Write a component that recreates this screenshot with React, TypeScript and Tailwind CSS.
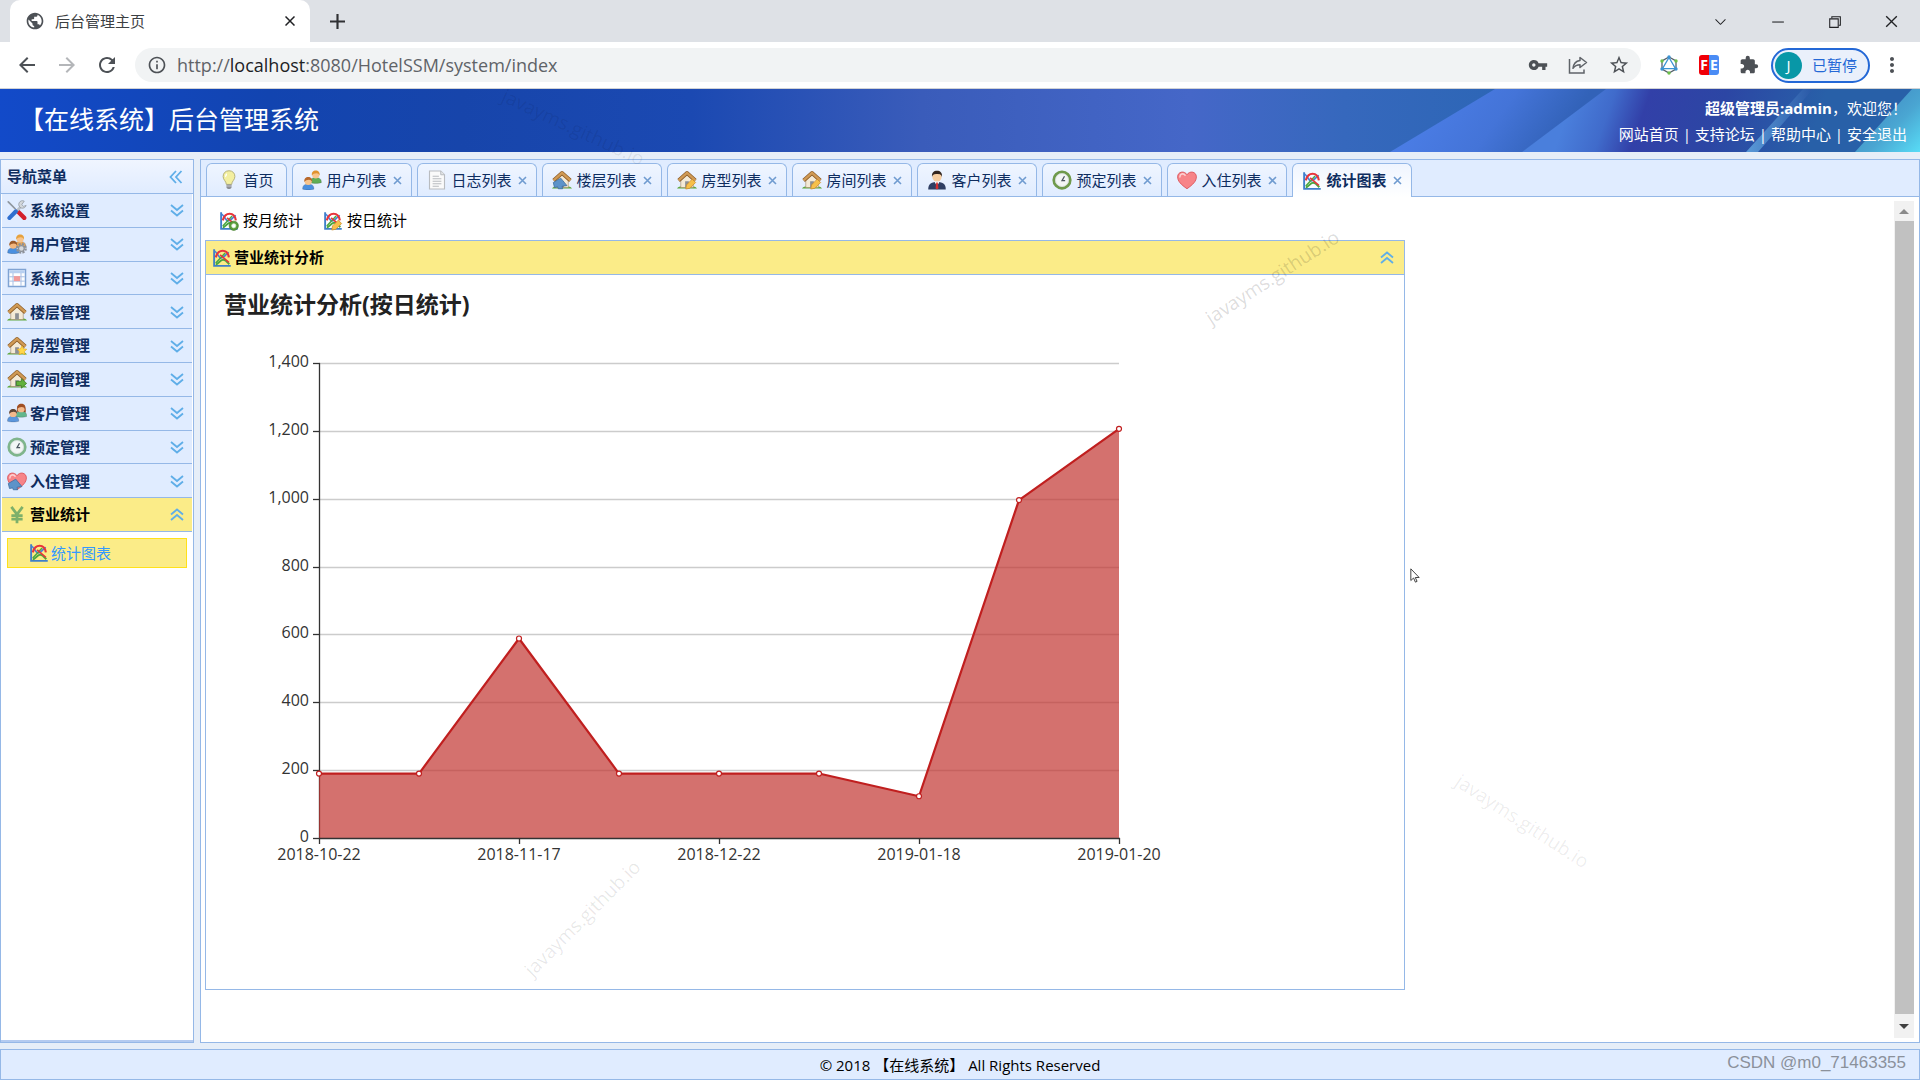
import type { ReactNode } from "react";
import {
  MdArrowBack,
  MdArrowForward,
  MdExtension,
  MdInfoOutline,
  MdMoreVert,
  MdPublic,
  MdRefresh,
  MdStarBorder,
  MdVpnKey,
} from "react-icons/md";
import { VscChevronDown, VscChromeClose, VscChromeMinimize, VscChromeRestore } from "react-icons/vsc";

/* ---------- 16px colour icons ---------- */

function Svg({ children }: { children: ReactNode }) {
  return (
    <svg viewBox="0 0 16 16" className="h-5 w-5 shrink-0" aria-hidden="true">
      {children}
    </svg>
  );
}

function PersonShape({ x, y, skin, hair, body }: { x: number; y: number; skin: string; hair: string; body: string }) {
  return (
    <g transform={`translate(${x} ${y})`}>
      <path d="M0 9.800C0 7 1 5.800 4.500 5.800S9 7 9 9.800c-2 .8-7 .8-9 0z" fill={body} stroke="#00000040" strokeWidth=".5" />
      <circle cx="4.500" cy="3.500" r="2.900" fill={skin} />
      <path d="M1.400 4C1 1.200 2.500 0 4.500 0s3.500 1.200 3.100 4C7 2.800 6.300 2.200 5 2.200 3.500 2.200 2.200 2.800 1.400 4z" fill={hair} />
    </g>
  );
}

const PencilBadge = () => (
  <path d="M7 15.200l.6-3.300L12.200 7.300l2.700 2.700-4.600 4.600z" fill="#f7c04a" stroke="#c98a2b" strokeWidth=".6" />
);

const PlusBadge = () => (
  <>
    <circle cx="11.800" cy="11.800" r="3.700" fill="#5a9c3c" stroke="#3f7a26" strokeWidth=".5" />
    <circle cx="11.800" cy="11.800" r="1.700" fill="#fff" stroke="#d5edc8" strokeWidth=".6" />
  </>
);

function ChartIcon({ badge }: { badge?: ReactNode }) {
  return (
    <Svg>
      <path d="M1.700 1v13.300H15" fill="none" stroke="#3f7fca" strokeWidth="1.500" />
      <path d="M3 13.200C5 13 6.300 9.500 9 9.300c2 0 3.200 1.800 4.800 3.700" fill="none" stroke="#4aa63f" strokeWidth="1.600" />
      <path d="M2.200 2.500c1.800.8 2.800 5 5 5.500C9.500 8.500 10.500 5 13.500 3.500" fill="none" stroke="#4a7fd6" strokeWidth="1.300" />
      <path d="M3 12L10.500 4" fill="none" stroke="#4aa63f" strokeWidth="1.200" />
      <path d="M3 7.500C4 4 6 2.200 8.500 2.200s4.500 2 5 5.300" fill="none" stroke="#e8343a" strokeWidth="1.700" />
      <path d="M6.500 5.500L13.500 11.500" fill="none" stroke="#e8343a" strokeWidth="1.200" />
      {badge}
    </Svg>
  );
}

function HouseIcon({ badge }: { badge?: ReactNode }) {
  return (
    <Svg>
      <path d="M0 14.800c1-3 15-3 16 0z" fill="#5fa83e" />
      <path d="M3 7.500L8 3l5 4.500V14H3z" fill="#f4ead6" stroke="#a58a66" strokeWidth=".5" />
      <path d="M6.500 9h3v5h-3z" fill="#8d8f94" />
      <path d="M1.300 8.400L8 2.400l6.700 6" fill="none" stroke="#8a5a25" strokeWidth="3" strokeLinejoin="round" />
      <path d="M1.300 8.300L8 2.300l6.700 6" fill="none" stroke="#d09a55" strokeWidth="2" strokeLinejoin="round" />
      {badge}
    </Svg>
  );
}

const StarBadge = () => (
  <path d="M12 7.800l1.200 2.400 2.600.4-1.900 1.800.5 2.600-2.400-1.200-2.400 1.200.5-2.600-1.900-1.800 2.600-.4z" fill="#ffd84a" stroke="#dfa51c" strokeWidth=".5" />
);
const ArrowBadge = () => (
  <path d="M7.500 9.800h4V7.700l4.200 3.800-4.200 3.800v-2.100h-4z" fill="#62b13c" stroke="#36781d" strokeWidth=".6" />
);
const MegaphoneBadge = () => (
  <path d="M1 10l6-3.500 5 6-4 .5.500 2H5l-.5-1.500L2 14z" fill="#5d93c9" stroke="#3b6b9c" strokeWidth=".6" />
);

function BulbIcon() {
  return (
    <Svg>
      <path d="M8 .6c-3 0-4.700 2-4.700 4.600C3.300 8 5.700 8.800 5.900 11.500h4.200C10.300 8.800 12.700 8 12.700 5.200 12.700 2.600 11 .6 8 .6z" fill="#f3efa0" stroke="#b5b27c" strokeWidth=".8" />
      <path d="M6.200 2.500C5 3.200 4.700 4.500 5 6c.8-.8 1.800-1.800 1.200-3.500z" fill="#fff" />
      <path d="M6 11.500h4v2.700c-.8 1.400-3.200 1.400-4 0z" fill="#8c8f95" />
      <path d="M6 12.800h4" stroke="#d9dadd" strokeWidth=".6" />
    </Svg>
  );
}

function UsersIcon() {
  return (
    <Svg>
      <PersonShape x={6.5} y={0.3} skin="#f8c48c" hair="#e0922e" body="#5fae55" />
      <PersonShape x={0.5} y={5.5} skin="#f8c48c" hair="#b8692c" body="#4a90e0" />
    </Svg>
  );
}

function UserGearIcon() {
  return (
    <Svg>
      <PersonShape x={6} y={0.3} skin="#f8c48c" hair="#e6a13c" body="#e8a85a" />
      <PersonShape x={0.5} y={5.3} skin="#f3b67e" hair="#9b5a2a" body="#4a90e0" />
      <circle cx="11.500" cy="11.500" r="3.400" fill="none" stroke="#8d9298" strokeWidth="2" strokeDasharray="1.700 .97" />
      <circle cx="11.500" cy="11.500" r="2.300" fill="#d7dadd" stroke="#8d9298" strokeWidth="1" />
    </Svg>
  );
}

function PeopleIcon() {
  return (
    <Svg>
      <path d="M8 7C7.500 2 9 .5 11.500.5S15.300 2 15 7.500z" fill="#a04f24" />
      <PersonShape x={6.8} y={1} skin="#f3b98c" hair="#a04f24" body="#62b68c" />
      <PersonShape x={0.4} y={4.8} skin="#f3b98c" hair="#5e4636" body="#5b96dc" />
    </Svg>
  );
}

function ManagerIcon() {
  return (
    <Svg>
      <path d="M1 15.500C1 11 3 9.500 8 9.500s7 1.500 7 6z" fill="#2f3e63" />
      <path d="M6 9.300h4L8 13z" fill="#fff" />
      <path d="M7.400 10h1.200l.6 4.500L8 15.500l-1.200-1z" fill="#d42f2f" />
      <circle cx="8" cy="5.500" r="3.700" fill="#f6cda0" />
      <path d="M4 5.500C3.700 2 5.500.6 8 .6s4.300 1.400 4 4.900c-.6-1.700-1.300-2.300-4-2.300s-3.400.6-4 2.300z" fill="#33261f" />
    </Svg>
  );
}

function DocumentIcon() {
  return (
    <Svg>
      <path d="M2 .8h9l3 3v11.400H2z" fill="#fafafa" stroke="#b9bcc0" strokeWidth=".9" />
      <path d="M11 .8v3h3" fill="#e5e7e9" stroke="#b9bcc0" strokeWidth=".8" />
      <path d="M4.500 5h5M4.500 7h7M4.500 9h7M4.500 11h7M4.500 13h5" stroke="#b9bcc0" strokeWidth=".9" />
    </Svg>
  );
}

function TableIcon() {
  return (
    <Svg>
      <path d="M1.200 1.200h13.600v13.600H1.200z" fill="#fdfeff" stroke="#7fa3d3" strokeWidth="1.200" />
      <path d="M1.800 1.800h12.400v2.400H1.800z" fill="#b8d0f0" />
      <path d="M1.800 7h12.400M1.800 10.500h12.400M4.800 4v10.300M11.200 4v10.300" stroke="#a9c0e4" strokeWidth=".8" />
      <path d="M5.500 6.500h5v4h-5z" fill="#f29a98" />
    </Svg>
  );
}

function ToolsIcon() {
  return (
    <Svg>
      <path d="M1 1.500l5.500 5.500" stroke="#8f979f" strokeWidth="1.400" strokeLinecap="round" />
      <path d="M8.500 9l5.300 5.300" stroke="#d3202c" strokeWidth="3.400" strokeLinecap="round" />
      <path d="M4 12.500L11.500 5" stroke="#b9bfc6" strokeWidth="2" />
      <path d="M2 14.300L7 9.200" stroke="#2f6fd0" strokeWidth="3.400" strokeLinecap="round" />
      <path d="M13.800.9a3 3 0 1 0 1.500 3.400l-2 .8-1.500-1.400z" fill="#d3d7db" stroke="#8f979f" strokeWidth=".6" />
    </Svg>
  );
}

function ClockIcon({ rim = "#6f9a4c" }: { rim?: string }) {
  return (
    <Svg>
      <circle cx="8" cy="8" r="6.600" fill="#f3f6f6" stroke={rim} strokeWidth="2.200" />
      <circle cx="8" cy="8" r="5.200" fill="none" stroke="#cfd8d4" strokeWidth=".6" />
      <path d="M10 5L8 8.500h2.500" fill="none" stroke="#4b5560" strokeWidth="1" />
    </Svg>
  );
}

function HeartIcon({ badge }: { badge?: ReactNode }) {
  return (
    <Svg>
      <path d="M8 15C3 11.500.5 8.800.5 5.500.5 1.200 6 .3 8 3.800 10 .3 15.500 1.200 15.500 5.500 15.500 8.800 13 11.500 8 15z" fill="#f78488" stroke="#d9555b" strokeWidth=".7" />
      <path d="M2.300 5.500C2.300 3 5 2.300 6.500 4.200" fill="none" stroke="#fdd0d1" strokeWidth="1.200" strokeLinecap="round" />
      {badge}
    </Svg>
  );
}

function YenIcon() {
  return (
    <Svg>
      <path d="M3.500 1.500L8 7.500l4.500-6M8 7v7.500M3.500 8.500h9M3.500 11.300h9" fill="none" stroke="#7db06a" strokeWidth="2.200" />
    </Svg>
  );
}

const chevrons = {
  left: "M7 1L1.500 7 7 13M12.500 1L7 7l5.500 6",
  down: "M1 2l6 5 6-5M1 7.500l6 5 6-5",
  up: "M1 6.500l6-5 6 5M1 12l6-5 6 5",
};

function Chevrons({ dir }: { dir: keyof typeof chevrons }) {
  return (
    <svg viewBox="0 0 14 14" className="h-[14px] w-[14px]" fill="none" stroke="#5faee8" strokeWidth="1.800">
      <path d={chevrons[dir]} />
    </svg>
  );
}

/* ---------- data ---------- */

const tabs = [
  { label: "首页", icon: <BulbIcon />, fixed: true },
  { label: "用户列表", icon: <UsersIcon /> },
  { label: "日志列表", icon: <DocumentIcon /> },
  { label: "楼层列表", icon: <HouseIcon badge={<MegaphoneBadge />} /> },
  { label: "房型列表", icon: <HouseIcon badge={<PencilBadge />} /> },
  { label: "房间列表", icon: <HouseIcon badge={<PencilBadge />} /> },
  { label: "客户列表", icon: <ManagerIcon /> },
  { label: "预定列表", icon: <ClockIcon /> },
  { label: "入住列表", icon: <HeartIcon /> },
  { label: "统计图表", icon: <ChartIcon />, active: true },
];

const menus = [
  { label: "系统设置", icon: <ToolsIcon /> },
  { label: "用户管理", icon: <UserGearIcon /> },
  { label: "系统日志", icon: <TableIcon /> },
  { label: "楼层管理", icon: <HouseIcon /> },
  { label: "房型管理", icon: <HouseIcon badge={<StarBadge />} /> },
  { label: "房间管理", icon: <HouseIcon badge={<ArrowBadge />} /> },
  { label: "客户管理", icon: <PeopleIcon /> },
  { label: "预定管理", icon: <ClockIcon rim="#7fb58c" /> },
  { label: "入住管理", icon: <HeartIcon badge={<MegaphoneBadge />} /> },
  { label: "营业统计", icon: <YenIcon />, active: true },
];

const values = [190, 190, 588, 190, 190, 190, 123, 996, 1206];
const dates = ["2018-10-22", "2018-11-17", "2018-12-22", "2019-01-18", "2019-01-20"];
const ticks = [0, 200, 400, 600, 800, 1000, 1200, 1400];

/* ---------- browser frame ---------- */

function BrowserBar() {
  return (
    <div className="shrink-0 bg-[#dee1e6]">
      <div className="flex h-[42px] items-center">
        <div className="ml-[10px] flex h-full w-[300px] items-center rounded-t-[10px] bg-white pr-[12px] pl-[15px]">
          <MdPublic className="h-5 w-5 text-[#4d5156]" />
          <span className="ml-[10px] flex-1 text-[15px] text-[#3c4043]">后台管理主页</span>
          <button aria-label="关闭标签页" className="flex h-[16px] w-[16px] items-center justify-center">
            <svg viewBox="0 0 10 10" className="h-[10px] w-[10px]" stroke="#202124" strokeWidth="1.500">
              <path d="M.5.5l9 9M9.500.5l-9 9" />
            </svg>
          </button>
        </div>
        <button aria-label="新标签页" className="ml-[18px] flex h-[18px] w-[18px] items-center justify-center">
          <svg viewBox="0 0 14 14" className="h-[15px] w-[15px]" stroke="#303134" strokeWidth="2">
            <path d="M7 0v14M0 7h14" />
          </svg>
        </button>
        <div className="ml-auto flex h-[36px] items-center gap-[40px] pr-[20px] text-[17px] text-[#202124]">
          <button aria-label="搜索标签页"><VscChevronDown /></button>
          <button aria-label="最小化"><VscChromeMinimize /></button>
          <button aria-label="还原"><VscChromeRestore /></button>
          <button aria-label="关闭"><VscChromeClose /></button>
        </div>
      </div>

      <div className="flex h-[47px] items-center border-b border-[#d0d2d6] bg-white pr-[16px] pl-[15px] text-[#4d5156]">
        <button aria-label="后退" className="mr-[16px]"><MdArrowBack className="h-6 w-6" /></button>
        <button aria-label="前进" className="mr-[16px] text-[#b4b6b9]"><MdArrowForward className="h-6 w-6" /></button>
        <button aria-label="刷新" className="mr-[16px]"><MdRefresh className="h-6 w-6" /></button>
        <div className="flex h-[34px] flex-1 items-center rounded-full bg-[#f1f3f4] pr-[11px] pl-[12px]">
          <MdInfoOutline className="h-5 w-5" />
          <span className="ml-[10px] flex-1 text-[18px] leading-6 text-[#5f6368]">
            http://<span className="text-[#202124]">localhost</span>:8080/HotelSSM/system/index
          </span>
          <div className="flex items-center gap-[20px]">
            <button aria-label="密码"><MdVpnKey className="h-5 w-5" /></button>
            <button aria-label="分享">
              <svg viewBox="0 0 20 20" className="h-5 w-5" fill="none" stroke="#5f6368" strokeWidth="1.500">
                <path d="M1.500 4v14H16v-3.500" />
                <path d="M12 2.500l6.500 5-6.500 5V9.800c-3 0-5 .8-7 3.500.5-4.500 3-7.300 7-7.800z" strokeLinejoin="round" />
              </svg>
            </button>
            <button aria-label="收藏"><MdStarBorder className="h-[22px] w-[22px]" /></button>
          </div>
        </div>
        <button aria-label="GraphQL" className="ml-[18px]">
          <svg viewBox="0 0 20 20" className="h-5 w-5" fill="none" strokeWidth="1.300">
            <path d="M10 2l7 4v8l-7 4-7-4V6z" stroke="#55606a" />
            <path d="M10 2.500l6.500 11.200h-13z" stroke="#3b93d3" />
            <g fill="#3b93d3"><circle cx="10" cy="2" r="1.700" /><circle cx="3" cy="14" r="1.700" /><circle cx="17" cy="14" r="1.700" /></g>
            <g fill="#6cc04a"><circle cx="3" cy="6" r="1.700" /><circle cx="17" cy="6" r="1.700" /><circle cx="10" cy="18" r="1.700" /></g>
          </svg>
        </button>
        <button aria-label="FeHelper" className="ml-[20px] flex h-5 w-5 overflow-hidden rounded-[3px] text-[14px] leading-5 font-bold text-white">
          <span className="w-1/2 bg-[#f00008]">F</span>
          <span className="w-1/2 bg-[#4a8cf5]">E</span>
        </button>
        <button aria-label="扩展程序" className="ml-[20px]"><MdExtension className="h-5 w-5" /></button>
        <button className="ml-[12px] flex h-[35px] w-[99px] items-center rounded-full border-2 border-[#2468d6] bg-[#eaf0fb] pl-[2px] text-[15px] text-[#2468d6]">
          <span className="flex h-[27px] w-[27px] items-center justify-center rounded-full bg-[#0897a7] text-white">J</span>
          <span className="ml-[10px]">已暂停</span>
        </button>
        <button aria-label="菜单" className="ml-[10px]"><MdMoreVert className="h-6 w-6" /></button>
      </div>
    </div>
  );
}

/* ---------- admin layout ---------- */

function Header() {
  return (
    <header className="relative flex h-[63px] shrink-0 items-center justify-between pr-[13px] pl-[19px] text-white">
      <svg viewBox="0 0 1920 63" preserveAspectRatio="none" className="absolute inset-0 h-full w-full" aria-hidden="true">
        <defs>
          <linearGradient id="sky">
            <stop offset="0" stopColor="#124ac9" />
            <stop offset=".14" stopColor="#1244b0" />
            <stop offset=".24" stopColor="#1745ab" />
            <stop offset=".36" stopColor="#1b49b2" />
            <stop offset=".48" stopColor="#3a5cba" />
            <stop offset=".62" stopColor="#4567c8" />
            <stop offset=".7" stopColor="#3668bd" />
            <stop offset=".78" stopColor="#2d66b6" />
          </linearGradient>
          <linearGradient id="band" gradientUnits="userSpaceOnUse" x1="1430" y1="20" x2="1530" y2="90">
            <stop offset="0" stopColor="#4a7ce4" />
            <stop offset=".5" stopColor="#4474d8" />
            <stop offset="1" stopColor="#3262b8" />
          </linearGradient>
          <linearGradient id="violet" gradientUnits="userSpaceOnUse" x1="1565" y1="31" x2="1790" y2="110">
            <stop offset="0" stopColor="#4a7fdc" />
            <stop offset=".16" stopColor="#406bcb" />
            <stop offset=".3" stopColor="#3240a8" />
            <stop offset=".6" stopColor="#2c46a4" />
            <stop offset="1" stopColor="#2860a8" />
          </linearGradient>
          <linearGradient id="ray" x1="0" y1="0" x2="1" y2="0">
            <stop offset="0" stopColor="#5a9ad8" />
            <stop offset="1" stopColor="#2a58a6" />
          </linearGradient>
          <linearGradient id="cyan" x1="0" y1="0" x2="1" y2="1">
            <stop offset="0" stopColor="#3b7dbd" />
            <stop offset=".6" stopColor="#4aa6d2" />
            <stop offset="1" stopColor="#58dcf6" />
          </linearGradient>
        </defs>
        <path d="M0 0h1920v63H0z" fill="url(#sky)" />
        <path d="M1390 63L1495 0H1612L1522 63z" fill="url(#band)" />
        <path d="M1522 63L1606 0H1920V63z" fill="url(#violet)" />
        <path d="M1746 63L1803 0H1813L1758 63z" fill="url(#ray)" />
        <path d="M1855 63L1912 0h8v63z" fill="url(#cyan)" />
      </svg>
      <h1 className="relative pb-[3px] text-[25px] leading-8">【在线系统】后台管理系统</h1>
      <div className="relative text-right text-[15px] leading-[26px]">
        <p><b>超级管理员:admin</b>，欢迎您！</p>
        <nav>
          <a href="#home">网站首页</a> | <a href="#forum">支持论坛</a> | <a href="#help">帮助中心</a> | <a href="#logout">安全退出</a>
        </nav>
      </div>
    </header>
  );
}

function Sidebar() {
  return (
    <aside className="flex w-[194px] shrink-0 flex-col border border-[#95b8e7] bg-white text-[15px] text-[#0e2d5f]">
      <div className="flex h-[34px] shrink-0 items-center justify-between border-b border-[#95b8e7] bg-linear-to-b from-[#f0f5ff] to-[#e0ecff] pr-[10px] pl-[6px] font-bold">
        导航菜单
        <button aria-label="收起"><Chevrons dir="left" /></button>
      </div>
      <ul className="grid h-[338px] shrink-0 grid-rows-10 px-px">
        {menus.map((m) => (
          <li
            key={m.label}
            className={m.active ? "border-b border-[#95b8e7] bg-[#fbec88] text-black" : "border-b border-[#95b8e7] bg-[#e0ecff]"}
          >
            <button className="flex h-full w-full items-center gap-[3px] pr-[8px] pl-[5px] font-bold">
              {m.icon}
              <span className="flex-1 text-left">{m.label}</span>
              <Chevrons dir={m.active ? "up" : "down"} />
            </button>
          </li>
        ))}
      </ul>
      <a href="#chart" className="mx-[6px] mt-[6px] flex h-[30px] items-center gap-[2px] border border-[#ffe11a] bg-[#fbec88] pl-[21px] text-[#3399ff]">
        <ChartIcon />
        统计图表
      </a>
      <div className="mt-auto h-[2px] bg-[#b4cbf0]" />
    </aside>
  );
}

function TabBar() {
  return (
    <div className="flex h-[37px] shrink-0 items-end gap-[5px] border-b border-[#95b8e7] bg-[#e0ecff] pl-[5px] text-[15px] text-[#0e2d5f]">
      {tabs.map((t) => (
        <div
          key={t.label}
          className={
            t.active
              ? "-mb-px flex h-[34px] w-[120px] items-center justify-center rounded-t-[6px] border border-b-0 border-[#95b8e7] bg-linear-to-b from-[#eff5ff] to-white font-bold"
              : t.fixed
                ? "flex h-[33px] w-[81px] items-center justify-center rounded-t-[6px] border border-b-0 border-[#95b8e7] bg-linear-to-b from-[#eff5ff] to-[#e0ecff]"
                : "flex h-[33px] w-[120px] items-center justify-center rounded-t-[6px] border border-b-0 border-[#95b8e7] bg-linear-to-b from-[#eff5ff] to-[#e0ecff]"
          }
        >
          <button className="flex items-center gap-[4px]">
            {t.icon}
            {t.label}
          </button>
          {!t.fixed && (
            <button aria-label={`关闭${t.label}`} className="ml-[6px]">
              <svg viewBox="0 0 9 9" className="h-[9px] w-[9px]" stroke="#6f9bd0" strokeWidth="1.600">
                <path d="M1 1l7 7M8 1L1 8" />
              </svg>
            </button>
          )}
        </div>
      ))}
    </div>
  );
}

const LEFT = 113;
const BASE = 505;
const px = (i: number) => LEFT + i * 100;
const py = (v: number) => BASE - (v * 475) / 1400;

function AreaChart() {
  const line = values.map((v, i) => `${px(i)},${py(v)}`).join(" ");
  return (
    <svg viewBox="0 0 1198 656" className="block w-full" fill="#333" fontSize="16" role="img" aria-label="营业统计分析">
      {ticks.map((t) => {
        const y = Math.round(py(t));
        return (
          <g key={t}>
            {t > 0 && <path d={`M${LEFT} ${y + 0.5}H${px(8)}`} stroke="#ccc" strokeWidth="1.300" />}
            <path d={`M${LEFT - 6} ${y + 0.5}h7`} stroke="#333" strokeWidth="1.300" />
            <text x={LEFT - 10} y={y + 4} textAnchor="end">{t.toLocaleString("en-US")}</text>
          </g>
        );
      })}
      <path d={`M${LEFT + 0.5} ${py(1400)}V${BASE}`} stroke="#333" strokeWidth="1.300" />
      <polygon points={`${px(0)},${BASE} ${line} ${px(8)},${BASE}`} fill="#c23531" fillOpacity=".7" />
      <path d={`M${LEFT} ${BASE + 0.5}H${px(8) + 1}`} stroke="#333" strokeWidth="1.300" />
      {dates.map((d, i) => (
        <g key={d}>
          <path d={`M${px(i * 2) + 0.5} ${BASE}v6`} stroke="#333" strokeWidth="1.300" />
          <text x={px(i * 2)} y={BASE + 22} textAnchor="middle">{d}</text>
        </g>
      ))}
      <polyline points={line} fill="none" stroke="#c01f1f" strokeWidth="2.200" strokeLinejoin="bevel" />
      {values.map((v, i) => (
        <circle key={i} cx={px(i)} cy={py(v)} r="2.500" fill="#fff" stroke="#c01f1f" strokeWidth="1.200" />
      ))}
    </svg>
  );
}

function StatsPage() {
  return (
    <div className="min-w-0 flex-1 pl-[4px] text-[15px]">
      <div className="flex h-[43px] items-center gap-[20px] pt-[4px] pl-[14px]">
        <button className="flex items-center gap-[4px]">
          <ChartIcon badge={<PlusBadge />} />
          按月统计
        </button>
        <button className="flex items-center gap-[4px]">
          <ChartIcon badge={<PencilBadge />} />
          按日统计
        </button>
      </div>
      <section className="w-full max-w-[1200px] border border-[#95b8e7]">
        <div className="flex h-[34px] items-center gap-[2px] border-b border-[#95b8e7] bg-[#fbec88] pr-[10px] pl-[6px] font-bold">
          <ChartIcon />
          <span className="flex-1">营业统计分析</span>
          <button aria-label="折叠"><Chevrons dir="up" /></button>
        </div>
        <h2 className="flex h-[58px] items-center pl-[18px] text-[23px] font-bold text-[#222]">营业统计分析(按日统计)</h2>
        <AreaChart />
      </section>
    </div>
  );
}

function ScrollBar() {
  return (
    <div className="mt-[4px] mr-[5px] mb-[4px] flex w-[20px] shrink-0 flex-col items-center bg-[#f1f1f1]">
      <svg viewBox="0 0 20 20" className="h-[20px] w-[20px]"><path d="M5 13l5-5 5 5z" fill="#8a8a8a" /></svg>
      <div className="w-[19px] flex-1 bg-[#c1c1c1]" />
      <svg viewBox="0 0 20 24" className="h-[24px] w-[20px]"><path d="M5 10l5 5 5-5z" fill="#404040" /></svg>
    </div>
  );
}

function Watermark({ className }: { className: string }) {
  return <span className={`pointer-events-none absolute text-[19px] leading-6 ${className}`}>javayms.github.io</span>;
}

export default function App() {
  return (
    <div className="relative flex min-h-screen flex-col overflow-hidden bg-[#e6eef8] font-['Open_Sans','Noto_Sans_CJK_SC',sans-serif] text-black">
      <BrowserBar />
      <Header />
      <div className="flex flex-1 gap-[6px] pt-[7px] pb-[6px]">
        <Sidebar />
        <main className="flex min-w-0 flex-1 flex-col border border-[#95b8e7] bg-white">
          <TabBar />
          <div className="flex flex-1">
            <StatsPage />
            <ScrollBar />
          </div>
        </main>
      </div>
      <footer className="flex h-[31px] shrink-0 items-center border border-[#95b8e7] bg-[#e0ecff] px-[13px] text-[15px]">
        <span className="flex-1" />
        <span className="whitespace-pre pt-[2px]">© 2018 【在线系统】 All Rights Reserved</span>
        <span className="flex-1 pb-[4px] text-right font-['Liberation_Sans',sans-serif] text-[17px] text-[#8b919b]">CSDN @m0_71463355</span>
      </footer>

      <Watermark className="top-[265px] left-[1195px] -rotate-33 text-[#00000026]" />
      <Watermark className="top-[906px] left-[505px] -rotate-45 text-[#00000018]" />
      <Watermark className="top-[809px] left-[1445px] rotate-33 text-[#00000014]" />
      <Watermark className="top-[115px] left-[496px] rotate-25 text-[#00000014]" />
      <svg viewBox="0 0 12 18" className="absolute top-[568px] left-[1410px] h-[15px] w-[10px]" fill="#fff" stroke="#444" strokeWidth="1.200">
        <path d="M1 1v14l3.300-3 2.200 5 2-1-2.200-4.600H11z" />
      </svg>
    </div>
  );
}
